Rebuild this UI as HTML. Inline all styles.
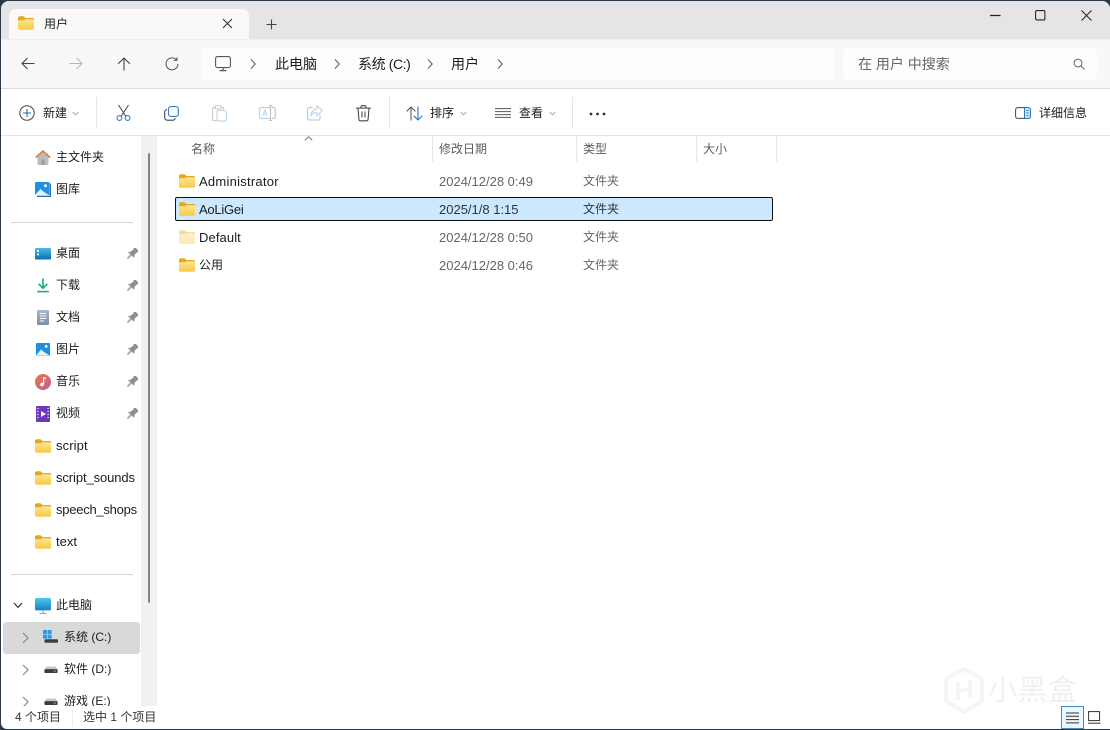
<!DOCTYPE html>
<html lang="zh"><head><meta charset="utf-8"><title>用户</title>
<style>
html,body{margin:0;padding:0;background:#2c3a48;width:1110px;height:730px;overflow:hidden}
#w{position:absolute;left:1px;top:1px;width:1109px;height:728px;background:#fff;border-radius:8px 8px 0 6px;overflow:hidden;font-family:"Liberation Sans","Noto Sans CJK SC",sans-serif;font-size:12px;color:#1c1c1c}
#r{position:absolute;left:-1px;top:-1px;width:1110px;height:730px}
.b{position:absolute}
.t{position:absolute;height:20px;line-height:20px;white-space:nowrap}
.g{color:#666}
.h{color:#5c5c5c}
.v{position:absolute;width:1px;background:#e6e6e6}
svg{position:absolute;overflow:visible}
</style></head><body>
<svg width="0" height="0" style="position:absolute"><defs>
<linearGradient id="fg" x1="0" y1="0" x2="0" y2="1"><stop offset="0" stop-color="#ffe692"/><stop offset="1" stop-color="#f8c846"/></linearGradient>
<linearGradient id="fl" x1="0" y1="0" x2="0" y2="1"><stop offset="0" stop-color="#fff2cf"/><stop offset="1" stop-color="#fde7b4"/></linearGradient>
<symbol id="f" viewBox="0 0 16 14"><path d="M0 2C0 1 .7.3 1.6.3H5.5L7.5 2H14.6C15.4 2 16 2.6 16 3.4V6H0Z" fill="#e4a91e"/><path d="M0 4.2H6L7.6 3.2H14.6C15.4 3.2 16 3.8 16 4.6V12.4C16 13.2 15.4 13.8 14.6 13.8H1.4C.6 13.8 0 13.2 0 12.4Z" fill="url(#fg)"/></symbol>
<symbol id="fd" viewBox="0 0 16 14"><path d="M0 2C0 1 .7.3 1.6.3H5.5L7.5 2H14.6C15.4 2 16 2.6 16 3.4V6H0Z" fill="#f4dc9c"/><path d="M0 4.2H6L7.6 3.2H14.6C15.4 3.2 16 3.8 16 4.6V12.4C16 13.2 15.4 13.8 14.6 13.8H1.4C.6 13.8 0 13.2 0 12.4Z" fill="url(#fl)"/></symbol>
<symbol id="p" viewBox="0 0 12 12"><g transform="rotate(45 6 6)" fill="#8c9096"><rect x="2.6" y="-1" width="6.8" height="2" rx=".6"/><rect x="3.6" y="1" width="4.8" height="4.6"/><path d="M1.8 7.4 3.6 5H8.4L10.2 7.4Z"/><rect x="5.3" y="7.4" width="1.4" height="5"/></g></symbol>
<symbol id="dr" viewBox="0 0 16 8"><path d="M2.6.5H13.4L15.5 4.5V7A1 1 0 0 1 14.5 8H1.5A1 1 0 0 1 .5 7V4.5Z" fill="#c9c9c9"/><rect x=".5" y="3.6" width="15" height="4.4" rx="1" fill="#3d3d3d"/><rect x="11" y="5.2" width="2.5" height="1" fill="#8fe08a"/></symbol>
<symbol id="ch" viewBox="0 0 8 12"><path d="M2 1.4 6.2 6 2 10.6" fill="none" stroke="#555" stroke-width="1"/></symbol>
<symbol id="cd" viewBox="0 0 8 5"><path d="M.8.8 4 4 7.2.8" fill="none" stroke="#9a9a9a" stroke-width="1"/></symbol>
</defs></svg>
<div id="w"><div id="r">
<!-- title bar -->
<div class="b" style="left:0;top:0;width:1110px;height:39px;background:#e5e5e5"></div>
<div class="b" style="left:9px;top:9px;width:240px;height:31px;background:#f9f9f9;border-radius:7px 7px 0 0"></div>
<svg style="left:18px;top:16px" width="16" height="14"><use href="#f" width="16" height="14"/></svg>
<div class="t" style="left:44px;top:14px">用户</div>
<svg style="left:222px;top:18px" width="11" height="11"><path d="M1 1 10 10M10 1 1 10" stroke="#333" stroke-width="1.1"/></svg>
<svg style="left:266px;top:19px" width="11" height="11"><path d="M5.5 .5V10.5M.5 5.5H10.5" stroke="#444" stroke-width="1.1"/></svg>
<svg style="left:990px;top:10px" width="11" height="11"><path d="M0 5.5H10.5" stroke="#222" stroke-width="1.2"/></svg>
<svg style="left:1035px;top:10px" width="11" height="11"><rect x=".6" y=".6" width="9.3" height="9.3" rx="1.2" fill="none" stroke="#222" stroke-width="1.1"/></svg>
<svg style="left:1081px;top:10px" width="11" height="11"><path d="M.5 .5 10.5 10.5M10.5 .5 .5 10.5" stroke="#222" stroke-width="1"/></svg>
<!-- nav row -->
<div class="b" style="left:0;top:39px;width:1110px;height:49px;background:#f8f8f8;border-top:1px solid #efefef;box-sizing:border-box"></div>
<div class="b" style="left:0;top:88px;width:1110px;height:1px;background:#dcdcdc"></div>
<div class="b" style="left:202px;top:48px;width:632px;height:32px;background:#fdfdfd;border-radius:4px"></div>
<div class="b" style="left:843px;top:48px;width:254px;height:32px;background:#fdfdfd;border-radius:4px"></div>
<svg style="left:21px;top:57px" width="14" height="13"><path d="M13.5 6.5H1M6.5 1 1 6.5 6.5 12" fill="none" stroke="#444" stroke-width="1.1"/></svg>
<svg style="left:69px;top:57px" width="14" height="13"><path d="M.5 6.5H13M7.5 1 13 6.5 7.5 12" fill="none" stroke="#b8b8b8" stroke-width="1.1"/></svg>
<svg style="left:117px;top:57px" width="14" height="14"><path d="M7 13.5V1M1.2 6.8 7 1 12.8 6.8" fill="none" stroke="#444" stroke-width="1.1"/></svg>
<svg style="left:165px;top:57px" width="14" height="14"><path d="M11.6 3A6 6 0 1 0 13 7M12 .3V3.4H8.9" fill="none" stroke="#555" stroke-width="1.05"/></svg>
<svg style="left:215px;top:56px" width="16" height="16"><rect x=".6" y=".6" width="14.8" height="11" rx="2" fill="#fdfdfd" stroke="#555" stroke-width="1.1"/><path d="M8 11.6V14.4M4.6 14.6H11.4" stroke="#555" stroke-width="1.2"/></svg>
<svg style="left:249px;top:58px" width="8" height="12"><use href="#ch" width="8" height="12"/></svg>
<div class="t" style="left:275px;top:54px;font-size:14px">此电脑</div>
<svg style="left:333px;top:58px" width="8" height="12"><use href="#ch" width="8" height="12"/></svg>
<div class="t" style="left:358px;top:54px;font-size:14px;letter-spacing:-.4px">系统 (C:)</div>
<svg style="left:426px;top:58px" width="8" height="12"><use href="#ch" width="8" height="12"/></svg>
<div class="t" style="left:451px;top:54px;font-size:14px">用户</div>
<svg style="left:496px;top:58px" width="8" height="12"><use href="#ch" width="8" height="12"/></svg>
<div class="t" style="left:858px;top:54px;font-size:14px;color:#666">在 用户 中搜索</div>
<svg style="left:1073px;top:58px" width="12" height="12"><circle cx="5" cy="5" r="3.9" fill="none" stroke="#666" stroke-width="1"/><path d="M7.9 7.9 11.4 11.4" stroke="#666" stroke-width="1"/></svg>
<!-- toolbar -->
<svg style="left:19px;top:105px" width="16" height="16"><circle cx="8" cy="8" r="7.2" fill="none" stroke="#444" stroke-width="1"/><path d="M8 4V12M4 8H12" stroke="#1d6fb8" stroke-width="1.1"/></svg>
<div class="t" style="left:43px;top:103px">新建</div>
<svg style="left:72px;top:111px" width="7" height="5"><use href="#cd" width="7" height="5"/></svg>
<div class="v" style="left:96px;top:97px;height:31px"></div>
<svg style="left:116px;top:105px" width="15" height="16"><path d="M2.5 0 10 11.5M12.5 0 5 11.5" stroke="#444" stroke-width="1" fill="none"/><circle cx="3.4" cy="13" r="2.4" fill="none" stroke="#2f7fc6" stroke-width="1.1"/><circle cx="11.6" cy="13" r="2.4" fill="none" stroke="#2f7fc6" stroke-width="1.1"/></svg>
<svg style="left:164px;top:106px" width="15" height="15"><rect x="4.5" y=".6" width="9.8" height="9.8" rx="2.4" fill="none" stroke="#2f7fc6" stroke-width="1.1"/><path d="M3 3.6A2.4 2.4 0 0 0 .7 6V11.6A2.6 2.6 0 0 0 3.3 14.2H8.8A2.4 2.4 0 0 0 11.2 12" fill="none" stroke="#444" stroke-width="1.1"/></svg>
<svg style="left:212px;top:105px" width="15" height="17" opacity=".42"><path d="M3 2.5H1.8A1.2 1.2 0 0 0 .6 3.7V14.4A1.2 1.2 0 0 0 1.8 15.6H5" fill="none" stroke="#777" stroke-width="1"/><path d="M9 2.5H10.4A1.2 1.2 0 0 1 11.6 3.7V5.5" fill="none" stroke="#777" stroke-width="1"/><rect x="3.2" y=".6" width="5.8" height="3.4" rx="1" fill="none" stroke="#777" stroke-width="1"/><rect x="5" y="5.5" width="9.4" height="10.6" rx="1.6" fill="none" stroke="#5a9fd8" stroke-width="1.1"/></svg>
<svg style="left:259px;top:105px" width="17" height="16" opacity=".45"><path d="M11 2.6H2A1.4 1.4 0 0 0 .6 4V12A1.4 1.4 0 0 0 2 13.4H11" fill="none" stroke="#5a9fd8" stroke-width="1.1"/><path d="M11.5 .6V15.4M9.8 .6H13.2M9.8 15.4H13.2M13 2.6H15A1.2 1.2 0 0 1 16.2 4V12A1.2 1.2 0 0 1 15 13.4H13" fill="none" stroke="#666" stroke-width="1"/><path d="M3.6 11 6 5 8.4 11M4.5 9H7.5" fill="none" stroke="#5a9fd8" stroke-width="1"/></svg>
<svg style="left:307px;top:105px" width="16" height="16" opacity=".45"><path d="M6 2.6H2A1.4 1.4 0 0 0 .6 4V13.6A1.4 1.4 0 0 0 2 15H11.6A1.4 1.4 0 0 0 13 13.6V10" fill="none" stroke="#777" stroke-width="1"/><path d="M10 .8 15.4 5.6 10 10.4V7.6C7.4 7.4 5.4 8.4 4 11 4.2 7 6.6 4.4 10 3.8Z" fill="none" stroke="#5a9fd8" stroke-width="1.05"/></svg>
<svg style="left:356px;top:105px" width="15" height="17"><path d="M0 3.1H15M5 3V2A1.3 1.3 0 0 1 6.3.7H8.7A1.3 1.3 0 0 1 10 2V3M2 3.2 2.9 14.2A1.7 1.7 0 0 0 4.6 15.8H10.4A1.7 1.7 0 0 0 12.1 14.2L13 3.2M6 6.5V12.5M9 6.5V12.5" fill="none" stroke="#444" stroke-width="1.05"/></svg>
<div class="v" style="left:389px;top:97px;height:31px"></div>
<svg style="left:406px;top:106px" width="17" height="15"><path d="M5 14.5V1M.6 5.4 5 1 9.4 5.4" fill="none" stroke="#555" stroke-width="1.05"/><path d="M12 .5V14M7.8 9.8 12 14 16.2 9.8" fill="none" stroke="#2677bd" stroke-width="1.1"/></svg>
<div class="t" style="left:430px;top:103px">排序</div>
<svg style="left:460px;top:111px" width="7" height="5"><use href="#cd" width="7" height="5"/></svg>
<svg style="left:495px;top:108px" width="16" height="10"><path d="M0 .6H16M0 3.6H16M0 6.6H16M0 9.4H16" stroke="#555" stroke-width="1"/></svg>
<div class="t" style="left:519px;top:103px">查看</div>
<svg style="left:549px;top:111px" width="7" height="5"><use href="#cd" width="7" height="5"/></svg>
<div class="v" style="left:572px;top:97px;height:31px"></div>
<svg style="left:589px;top:112px" width="17" height="4"><circle cx="2" cy="2" r="1.4" fill="#333"/><circle cx="8.5" cy="2" r="1.4" fill="#333"/><circle cx="15" cy="2" r="1.4" fill="#333"/></svg>
<svg style="left:1015px;top:107px" width="16" height="12"><rect x=".6" y=".6" width="14.8" height="10.8" rx="2.2" fill="none" stroke="#444" stroke-width="1"/><path d="M9.5 .6H13.2A2.2 2.2 0 0 1 15.4 2.8V9.2A2.2 2.2 0 0 1 13.2 11.4H9.5Z" fill="#d6ebfb" stroke="#2677bd" stroke-width="1"/><path d="M11.2 3.6H13.6M11.2 6H13.6M11.2 8.4H13.6" stroke="#2677bd" stroke-width=".9"/></svg>
<div class="t" style="left:1039px;top:103px">详细信息</div>
<div class="b" style="left:0;top:135px;width:1110px;height:1px;background:#e2e2e2"></div>
<!-- sidebar -->
<div class="b" style="left:141px;top:136px;width:16px;height:570px;background:#f1f1f1"></div>
<div class="b" style="left:148px;top:153px;width:2px;height:450px;background:#858585;border-radius:1px"></div>
<div class="b" style="left:11px;top:222px;width:122px;height:1px;background:#d6d6d6"></div>
<div class="b" style="left:11px;top:574px;width:122px;height:1px;background:#d6d6d6"></div>
<div class="b" style="left:3px;top:622px;width:137px;height:32px;background:#d9d9d9;border-radius:3px"></div>
<svg style="left:35px;top:150px" width="16" height="15"><path d="M2.5 7 8 2 13.5 7V14A1 1 0 0 1 12.5 15H3.5A1 1 0 0 1 2.5 14Z" fill="#bdbdbd"/><rect x="6.2" y="9.5" width="3.6" height="5.5" fill="#a0a0a0"/><path d="M.8 7.6 8 1 15.2 7.6" fill="none" stroke="#d9823f" stroke-width="1.7"/></svg>
<div class="t" style="left:56px;top:147px">主文件夹</div>
<svg style="left:35px;top:182px" width="16" height="15"><rect x="0" y="0" width="14.5" height="13.5" rx="1" fill="#1f8fe0"/><path d="M0 13 5.5 7 9 10 14.5 13.5H.6Z" fill="#e4f3fc"/><circle cx="10.5" cy="3.8" r="1.5" fill="#fff"/><path d="M15.4 1.5V14.4H2" fill="none" stroke="#2a6ea8" stroke-width="1.2"/></svg>
<div class="t" style="left:56px;top:179px">图库</div>
<svg style="left:35px;top:248px" width="16" height="12"><defs><linearGradient id="dk" x1="0" y1="0" x2="0" y2="1"><stop offset="0" stop-color="#45bcec"/><stop offset="1" stop-color="#0f6fa8"/></linearGradient></defs><rect width="16" height="11.5" rx="1" fill="url(#dk)"/><rect x="2" y="2" width="2" height="2" fill="#d8f2fc"/><rect x="2" y="5.4" width="2" height="2" fill="#d8f2fc"/></svg>
<div class="t" style="left:56px;top:243px">桌面</div>
<svg style="left:37px;top:278px" width="12" height="15"><path d="M6 .5V10M1.6 5.8 6 10.2 10.4 5.8" fill="none" stroke="#1da886" stroke-width="1.6"/><path d="M.2 13.6H11.8" stroke="#1da886" stroke-width="1.6"/></svg>
<div class="t" style="left:56px;top:275px">下载</div>
<svg style="left:37px;top:310px" width="12" height="15"><defs><linearGradient id="dc" x1="0" y1="0" x2="0" y2="1"><stop offset="0" stop-color="#a9b8ca"/><stop offset="1" stop-color="#7c8fa8"/></linearGradient></defs><rect width="12" height="15" rx="1" fill="url(#dc)"/><path d="M3 3.5H9M3 6H9M3 8.5H9M3 11H7" stroke="#fff" stroke-width="1"/></svg>
<div class="t" style="left:56px;top:307px">文档</div>
<svg style="left:36px;top:343px" width="14" height="13"><rect width="14" height="13" rx="1" fill="#1f8fe0"/><path d="M0 12.6 5 6.4 8 9 14 12.8Z" fill="#e8f5fd"/><circle cx="10.2" cy="3.4" r="1.4" fill="#fff"/></svg>
<div class="t" style="left:56px;top:339px">图片</div>
<svg style="left:35px;top:374px" width="16" height="16"><defs><linearGradient id="mu" x1="0" y1="0" x2="1" y2="1"><stop offset="0" stop-color="#e8794a"/><stop offset="1" stop-color="#c45d8e"/></linearGradient></defs><circle cx="8" cy="8" r="8" fill="url(#mu)"/><path d="M8.6 3.4V10.2" stroke="#fff" stroke-width="1.2"/><circle cx="7" cy="10.6" r="1.8" fill="#fff"/><path d="M8.6 3.4 11 4.6" stroke="#fff" stroke-width="1.2"/></svg>
<div class="t" style="left:56px;top:371px">音乐</div>
<svg style="left:36px;top:406px" width="14" height="16"><rect width="14" height="16" rx="1" fill="#6b39b8"/><path d="M5 5 10 8 5 11Z" fill="#fff"/><path d="M1.2 2.5H2.6M1.2 5.5H2.6M1.2 8.5H2.6M1.2 11.5H2.6M11.4 2.5H12.8M11.4 5.5H12.8M11.4 8.5H12.8M11.4 11.5H12.8" stroke="#e6d8f8" stroke-width="1.2"/></svg>
<div class="t" style="left:56px;top:403px">视频</div>
<svg style="left:126px;top:248px" width="12" height="12"><use href="#p" width="12" height="12"/></svg>
<svg style="left:126px;top:280px" width="12" height="12"><use href="#p" width="12" height="12"/></svg>
<svg style="left:126px;top:312px" width="12" height="12"><use href="#p" width="12" height="12"/></svg>
<svg style="left:126px;top:344px" width="12" height="12"><use href="#p" width="12" height="12"/></svg>
<svg style="left:126px;top:376px" width="12" height="12"><use href="#p" width="12" height="12"/></svg>
<svg style="left:126px;top:408px" width="12" height="12"><use href="#p" width="12" height="12"/></svg>
<svg style="left:35px;top:439px" width="16" height="14"><use href="#f" width="16" height="14"/></svg>
<div class="t" style="left:56px;top:436px;font-size:13px;letter-spacing:.1px">script</div>
<svg style="left:35px;top:471px" width="16" height="14"><use href="#f" width="16" height="14"/></svg>
<div class="t" style="left:56px;top:468px;font-size:13px;letter-spacing:-.1px">script_sounds</div>
<svg style="left:35px;top:503px" width="16" height="14"><use href="#f" width="16" height="14"/></svg>
<div class="t" style="left:56px;top:500px;font-size:13px;letter-spacing:-.25px">speech_shops</div>
<svg style="left:35px;top:535px" width="16" height="14"><use href="#f" width="16" height="14"/></svg>
<div class="t" style="left:56px;top:532px;font-size:13px">text</div>
<svg style="left:13px;top:602px" width="10" height="7"><path d="M1 1 5 5.4 9 1" fill="none" stroke="#333" stroke-width="1.2"/></svg>
<svg style="left:35px;top:598px" width="16" height="16"><defs><linearGradient id="pc" x1="0" y1="0" x2="0" y2="1"><stop offset="0" stop-color="#4cc8ee"/><stop offset="1" stop-color="#1282be"/></linearGradient></defs><rect width="16" height="12.4" rx="1.5" fill="url(#pc)"/><path d="M8 12.4V15M4.6 15.4H11.4" stroke="#9aa6b0" stroke-width="1.1"/></svg>
<div class="t" style="left:56px;top:595px">此电脑</div>
<svg style="left:22px;top:632px" width="7" height="12"><path d="M1 1 6 6 1 11" fill="none" stroke="#888" stroke-width="1.2"/></svg>
<svg style="left:43px;top:630px" width="15" height="14"><rect x="0" y="0" width="4" height="4" fill="#2a9ee0"/><rect x="4.6" y="0" width="4" height="4" fill="#2a9ee0"/><rect x="0" y="4.6" width="4" height="4" fill="#2a9ee0"/><rect x="4.6" y="4.6" width="4" height="4" fill="#2a9ee0"/><rect x="1.5" y="9.2" width="13.5" height="3.6" rx="1" fill="#3d3d3d"/></svg>
<div class="t" style="left:64px;top:627px">系统 (C:)</div>
<svg style="left:22px;top:664px" width="7" height="12"><path d="M1 1 6 6 1 11" fill="none" stroke="#888" stroke-width="1.2"/></svg>
<svg style="left:44px;top:666px" width="14" height="7"><use href="#dr" width="14" height="7"/></svg>
<div class="t" style="left:64px;top:659px">软件 (D:)</div>
<div class="b" style="left:0;top:690px;width:141px;height:16px;overflow:hidden">
<svg style="left:22px;top:6px" width="7" height="12"><path d="M1 1 6 6 1 11" fill="none" stroke="#888" stroke-width="1.2"/></svg>
<svg style="left:44px;top:8px" width="14" height="7"><use href="#dr" width="14" height="7"/></svg>
<div class="t" style="left:64px;top:1px">游戏 (E:)</div>
</div>
<!-- file list header -->
<svg style="left:304px;top:136px" width="9" height="5"><path d="M.8 4.2 4.5 .8 8.2 4.2" fill="none" stroke="#777" stroke-width="1"/></svg>
<div class="t h" style="left:191px;top:139px">名称</div>
<div class="v" style="left:432px;top:136px;height:26px"></div>
<div class="t h" style="left:439px;top:139px">修改日期</div>
<div class="v" style="left:576px;top:136px;height:26px"></div>
<div class="t h" style="left:583px;top:139px">类型</div>
<div class="v" style="left:696px;top:136px;height:26px"></div>
<div class="t h" style="left:703px;top:139px">大小</div>
<div class="v" style="left:776px;top:136px;height:26px"></div>
<!-- rows -->
<div class="b" style="left:175px;top:197px;width:598px;height:24px;background:#cce8ff;border:1px solid #111;box-sizing:border-box;border-radius:2px"></div>
<svg style="left:179px;top:174px" width="16" height="14"><use href="#f" width="16" height="14"/></svg>
<div class="t" style="left:199px;top:172px;font-size:13px;letter-spacing:.25px">Administrator</div>
<div class="t g" style="left:439px;top:172px;font-size:13px">2024/12/28 0:49</div>
<div class="t g" style="left:583px;top:171px">文件夹</div>
<svg style="left:179px;top:202px" width="16" height="14"><use href="#f" width="16" height="14"/></svg>
<div class="t" style="left:199px;top:200px;font-size:13px;letter-spacing:-.25px">AoLiGei</div>
<div class="t" style="left:439px;top:200px;font-size:13px;color:#333">2025/1/8 1:15</div>
<div class="t" style="left:583px;top:199px;color:#333">文件夹</div>
<svg style="left:179px;top:230px" width="16" height="14"><use href="#fd" width="16" height="14"/></svg>
<div class="t" style="left:199px;top:228px;font-size:13px;letter-spacing:.1px">Default</div>
<div class="t g" style="left:439px;top:228px;font-size:13px">2024/12/28 0:50</div>
<div class="t g" style="left:583px;top:227px">文件夹</div>
<svg style="left:179px;top:258px" width="16" height="14"><use href="#f" width="16" height="14"/></svg>
<div class="t" style="left:199px;top:255px">公用</div>
<div class="t g" style="left:439px;top:256px;font-size:13px">2024/12/28 0:46</div>
<div class="t g" style="left:583px;top:255px">文件夹</div>
<!-- status -->
<div class="t" style="left:15px;top:707px;color:#333">4 个项目</div>
<div class="v" style="left:72px;top:710px;height:16px;background:#eee"></div>
<div class="t" style="left:83px;top:707px;color:#333">选中 1 个项目</div>
<div class="b" style="left:1061px;top:706px;width:23px;height:23px;background:#eef7ff;border:1px solid #3a8cc4;box-sizing:border-box"></div>
<svg style="left:1066px;top:712px" width="13" height="12"><path d="M0 1H13M0 4.3H13M0 7.6H13M0 10.9H13" stroke="#333" stroke-width="1"/></svg>
<svg style="left:1088px;top:711px" width="13" height="13"><rect x=".6" y=".6" width="11" height="9" fill="none" stroke="#333" stroke-width="1"/><path d="M0 12.2H12.6" stroke="#333" stroke-width="1"/></svg>
<!-- watermark -->
<svg style="left:944px;top:668px" width="40" height="45" opacity=".5"><path d="M20 1 38 11V33L20 44 2 33V11Z" fill="none" stroke="#ececec" stroke-width="4"/><path d="M14 14V32M26 12V30M14 24 26 20" fill="none" stroke="#ececec" stroke-width="4"/></svg>
<div class="t" style="left:988px;top:672px;height:38px;line-height:38px;font-size:29px;color:#f0f0f0;letter-spacing:1px">小黑盒</div>
</div></div>
</body></html>
